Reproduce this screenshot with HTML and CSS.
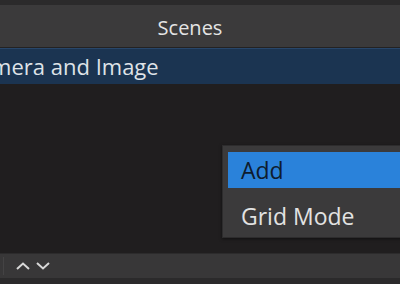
FILE: index.html
```html
<!DOCTYPE html>
<html lang="en">
<head>
    <meta charset="UTF-8">
    <title>Scenes</title>
    <link rel="stylesheet" href="styles.css">
</head>
<body>
    <div class="dock">
        <div class="dock-top"></div>
        <div class="dock-title">Scenes</div>
        <div class="scene-list">
            <div class="scene-item selected">Camera and Image</div>
        </div>
        <div class="toolbar">
            <span class="sep"></span>
            <button class="tool-btn" title="Move up">
                <svg width="14" height="8" viewBox="0 0 14 8"><path d="M1 7 L7 1.5 L13 7" fill="none" stroke="#d8d8d8" stroke-width="2"/></svg>
            </button>
            <button class="tool-btn" title="Move down">
                <svg width="14" height="8" viewBox="0 0 14 8"><path d="M1 1 L7 6.5 L13 1" fill="none" stroke="#d8d8d8" stroke-width="2"/></svg>
            </button>
        </div>
        <div class="dock-bottom"></div>

        <div class="context-menu">
            <div class="menu-item active">Add</div>
            <div class="menu-item">Grid Mode</div>
        </div>
    </div>
</body>
</html>
```

FILE: styles.css
```css
body {
  margin: 0;
  background-color: #201e1f;
  font-family: "Open Sans", "Noto Sans", sans-serif;
  overflow: hidden;
}
.dock {
  position: relative;
  width: 400px;
  height: 284px;
  display: flex;
  flex-direction: column;
}
.dock-top {
  height: 5px;
  background-color: #2b2a2b;
}
.dock-title {
  height: 40px;
  padding-top: 2px;
  line-height: 42px;
  background-color: #3b3a3b;
  color: #e4e4e4;
  font-size: 20px;
  text-align: center;
  padding-right: 20px;
  border-bottom: 1px solid #232223;
}
.scene-list {
  flex: 1;
  background-color: #201e1f;
}
.scene-item {
  height: 34px;
  padding-top: 1px;
  line-height: 33px;
  font-size: 22px;
  color: #dfe3e8;
  margin-left: -35px;
  white-space: nowrap;
}
.scene-item.selected {
  background-color: #1b3451;
  border-top: 1px solid #28466a;
}
.toolbar {
  height: 24px;
  display: flex;
  align-items: center;
  gap: 6px;
  padding-left: 3px;
  background-color: #383738;
  border-top: 1px solid #2c2b2c;
}
.sep {
  width: 1px;
  height: 18px;
  background-color: #444344;
  margin-right: 6px;
}
.tool-btn {
  background: none;
  border: none;
  padding: 0;
  width: 14px;
  height: 10px;
  display: flex;
  align-items: center;
}
.dock-bottom {
  height: 6px;
  background-color: #2b2a2b;
}
.context-menu {
  position: absolute;
  left: 222px;
  top: 145px;
  width: 200px;
  padding: 6px 0 3px 5px;
  background-color: #3b3a3b;
  border: 1px solid #2d2c2d;
  box-shadow: 0 1px 3px rgba(0, 0, 0, 0.5);
}
.menu-item {
  height: 36px;
  line-height: 37px;
  padding-left: 13px;
  font-size: 23px;
  color: #e2e2e2;
}
.menu-item + .menu-item {
  margin-top: 10px;
}
.menu-item.active {
  background-color: #2a82da;
  color: #0e1c2e;
}
```
